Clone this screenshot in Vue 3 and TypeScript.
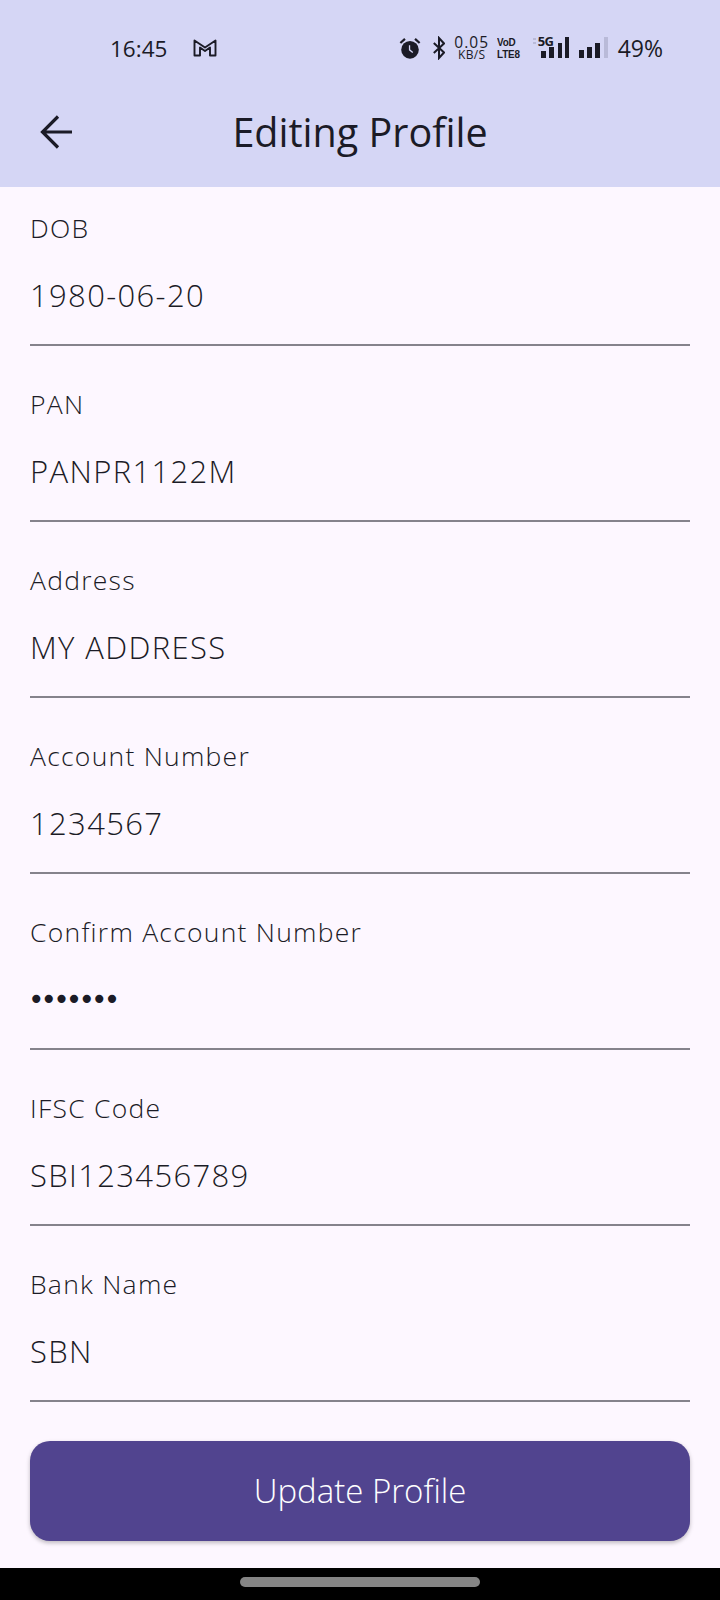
<script setup lang="ts">
interface Field { label: string; value: string; secret?: boolean }
const fields: Field[] = [
  { label: 'DOB', value: '1980-06-20' },
  { label: 'PAN', value: 'PANPR1122M' },
  { label: 'Address', value: 'MY ADDRESS' },
  { label: 'Account Number', value: '1234567' },
  { label: 'Confirm Account Number', value: '•••••••', secret: true },
  { label: 'IFSC Code', value: 'SBI123456789' },
  { label: 'Bank Name', value: 'SBN' },
]
</script>

<template>
  <div class="screen">
    <header class="top">
      <div class="status">
        <div class="left">
          <span class="time">16:45</span>
          <svg class="gmail" width="24" height="18" viewBox="0 0 24 18" fill="none" stroke="#1b1b26" stroke-width="1.9" stroke-linejoin="round">
            <path d="M1.5 1.5 L12 8.5 L22.5 1.5 V16.5 H17 V8.5 L12 12 L7 8.5 V16.5 H1.5 Z" />
          </svg>
        </div>
        <div class="right">
          <svg class="alarm" width="22" height="24" viewBox="0 0 24 26">
            <circle cx="12" cy="15" r="9.6" fill="#1b1b26" />
            <path d="M1.5 7.5 L6.5 3 M22.5 7.5 L17.5 3" stroke="#1b1b26" stroke-width="2.4" fill="none" />
            <path d="M11.5 10 V15 L15 18" stroke="#d5d6f5" stroke-width="1.4" fill="none" />
          </svg>
          <svg class="bt" width="12" height="24" viewBox="0 0 12 24" fill="none" stroke="#1b1b26" stroke-width="2">
            <path d="M0.8 7 L11 16.5 L6 22 V2 L11 7.5 L0.8 17" />
          </svg>
          <div class="speed"><span>0.05</span><span class="unit">KB/S</span></div>
          <div class="volte"><span>VoD</span><span>LTE8</span></div>
          <div class="net">
            <span class="fiveg">5G</span>
            <svg width="36" height="22" viewBox="0 0 36 22">
              <rect x="0" y="1" width="3" height="2" fill="#b9bad8" />
              <rect x="0" y="5" width="3" height="2" fill="#b9bad8" />
              <rect x="8" y="14" width="5" height="7" fill="#1b1b26" />
              <rect x="16" y="10" width="5" height="11" fill="#1b1b26" />
              <rect x="25" y="6" width="4" height="15" fill="#1b1b26" />
              <rect x="32" y="0" width="4" height="21" fill="#1b1b26" />
            </svg>
          </div>
          <svg class="signal" width="29" height="22" viewBox="0 0 29 22">
            <rect x="0" y="13" width="5" height="8" fill="#1b1b26" />
            <rect x="8" y="10" width="5" height="11" fill="#1b1b26" />
            <rect x="16" y="6" width="5" height="15" fill="#1b1b26" />
            <rect x="25" y="0" width="4" height="21" fill="#b9bad8" />
          </svg>
          <span class="batt">49%</span>
        </div>
      </div>
      <div class="bar">
        <svg class="back" width="36" height="36" viewBox="0 0 36 36" fill="none" stroke="#1b1b26" stroke-width="3.2">
          <path d="M34 18 H5 M20 2.5 L4.5 18 L20 33.5" />
        </svg>
        <h1>Editing Profile</h1>
      </div>
    </header>

    <main class="form">
      <div v-for="f in fields" :key="f.label" class="field">
        <label>{{ f.label }}</label>
        <div class="value" :class="{ secret: f.secret }">{{ f.value }}</div>
      </div>
      <button class="submit" type="button">Update Profile</button>
    </main>

    <footer class="nav"><span class="pill"></span></footer>
  </div>
</template>

<style>
html, body { margin: 0; padding: 0; background: #000; }
</style>

<style scoped>
.screen {
  width: 720px;
  height: 1600px;
  display: flex;
  flex-direction: column;
  background: #fdf7ff;
  color: #1b1b26;
  font-family: "Open Sans", "Noto Sans", sans-serif;
  overflow: hidden;
}
.top { height: 187px; background: #d5d6f5; flex: none; }
.status {
  height: 96px;
  box-sizing: border-box;
  padding: 32px 57px 0 110px;
  display: flex;
  justify-content: space-between;
  align-items: flex-start;
}
.left { display: flex; align-items: center; gap: 26px; height: 32px; }
.time { font-size: 22.5px; }
.right { display: flex; align-items: center; height: 32px; }
.bt { margin-left: 12px; }
.speed {
  display: flex;
  flex-direction: column;
  align-items: center;
  width: 36px;
  margin-left: 9px;
  font-size: 15.5px;
  line-height: 13px;
  letter-spacing: 1px;
}
.speed .unit { font-size: 12px; line-height: 12px; letter-spacing: .3px; }
.volte {
  display: flex;
  flex-direction: column;
  width: 24px;
  margin-left: 7px;
  font-family: "Liberation Sans", sans-serif;
  font-size: 11.5px;
  line-height: 12px;
  font-weight: 700;
  letter-spacing: -0.2px;
  transform: scaleX(.86);
  transform-origin: left center;
}
.net { position: relative; width: 36px; height: 22px; margin-left: 12px; }
.net svg { display: block; }
.fiveg {
  position: absolute;
  left: 5px;
  top: -2px;
  font-size: 13px;
  line-height: 13px;
  font-weight: 700;
  letter-spacing: -0.5px;
}
.signal { margin-left: 10px; }
.batt { font-size: 23px; margin-left: 10px; }
.bar { height: 91px; display: flex; align-items: center; justify-content: center; position: relative; padding-bottom: 19px; box-sizing: border-box; }
.back { position: absolute; left: 38px; top: 18px; }
h1 { margin: 0; font-size: 39.5px; font-weight: 500; line-height: 48px; }
.form { flex: 1; box-sizing: border-box; padding: 0 30px; display: flex; flex-direction: column; }
.field {
  height: 176px;
  box-sizing: border-box;
  border-bottom: 2px solid #85838c;
  padding-top: 26px;
  flex: none;
}
.field:first-child { height: 159px; padding-top: 25px; }
label { display: block; font-size: 26.5px; line-height: 32px; font-weight: 300; letter-spacing: 1.25px; }
.field:not(:first-child) label { margin-top: 16px; }
.value { font-size: 31px; line-height: 40px; margin-top: 31px; font-weight: 340; letter-spacing: 1.35px; }
.secret { font-family: "DejaVu Sans", sans-serif; font-size: 28px; font-weight: 400; letter-spacing: -3.9px; margin: 32px 0 0 -2px; }
.submit {
  margin-top: 39px;
  height: 100px;
  flex: none;
  border: 0;
  border-radius: 20px;
  background: #51448f;
  color: #fff;
  font: inherit;
  font-size: 33px;
  font-weight: 300;
  padding-bottom: 2px;
  box-shadow: 0 2px 4px rgba(0, 0, 0, .25);
}
.nav { height: 32px; background: #000; flex: none; display: flex; justify-content: center; align-items: center; }
.pill { width: 240px; height: 10px; border-radius: 5px; background: #858585; margin-top: -4px; }
</style>
